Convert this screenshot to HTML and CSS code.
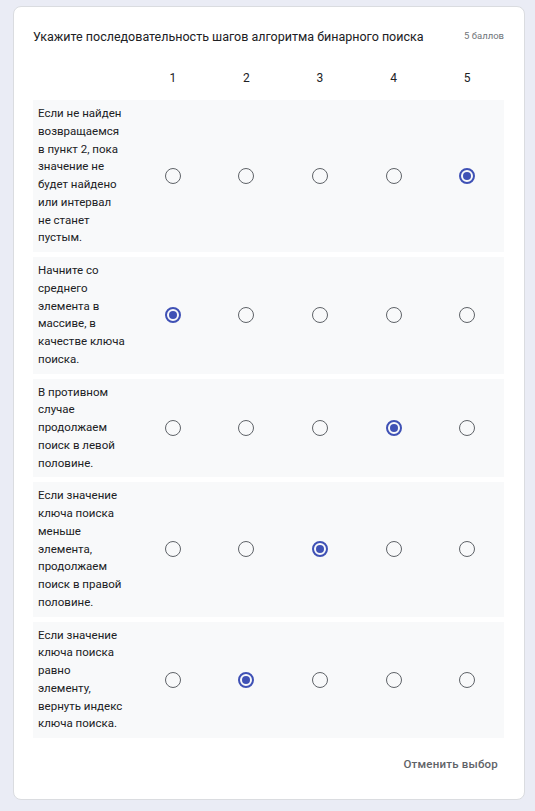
FILE: index.html
```html
<!DOCTYPE html>
<html lang="ru">
<head>
<meta charset="utf-8">
<link rel="stylesheet" href="styles.css">
</head>
<body>
<div class="card">
  <div class="head">
    <div class="title">Укажите последовательность шагов алгоритма бинарного поиска</div>
    <div class="points">5 баллов</div>
  </div>
  <div class="grid">
    <div class="hrow">
      <div></div>
      <div class="num">1</div><div class="num">2</div><div class="num">3</div><div class="num">4</div><div class="num">5</div>
    </div>
    <div class="row">
      <div class="label">Если не найден<br>возвращаемся<br>в пункт 2, пока<br>значение не<br>будет найдено<br>или интервал<br>не станет<br>пустым.</div>
      <div class="cell"><span class="radio"></span></div>
      <div class="cell"><span class="radio"></span></div>
      <div class="cell"><span class="radio"></span></div>
      <div class="cell"><span class="radio"></span></div>
      <div class="cell"><span class="radio on"></span></div>
    </div>
    <div class="row">
      <div class="label">Начните со<br>среднего<br>элемента в<br>массиве, в<br>качестве ключа<br>поиска.</div>
      <div class="cell"><span class="radio on"></span></div>
      <div class="cell"><span class="radio"></span></div>
      <div class="cell"><span class="radio"></span></div>
      <div class="cell"><span class="radio"></span></div>
      <div class="cell"><span class="radio"></span></div>
    </div>
    <div class="row">
      <div class="label">В противном<br>случае<br>продолжаем<br>поиск в левой<br>половине.</div>
      <div class="cell"><span class="radio"></span></div>
      <div class="cell"><span class="radio"></span></div>
      <div class="cell"><span class="radio"></span></div>
      <div class="cell"><span class="radio on"></span></div>
      <div class="cell"><span class="radio"></span></div>
    </div>
    <div class="row">
      <div class="label">Если значение<br>ключа поиска<br>меньше<br>элемента,<br>продолжаем<br>поиск в правой<br>половине.</div>
      <div class="cell"><span class="radio"></span></div>
      <div class="cell"><span class="radio"></span></div>
      <div class="cell"><span class="radio on"></span></div>
      <div class="cell"><span class="radio"></span></div>
      <div class="cell"><span class="radio"></span></div>
    </div>
    <div class="row">
      <div class="label">Если значение<br>ключа поиска<br>равно<br>элементу,<br>вернуть индекс<br>ключа поиска.</div>
      <div class="cell"><span class="radio"></span></div>
      <div class="cell"><span class="radio on"></span></div>
      <div class="cell"><span class="radio"></span></div>
      <div class="cell"><span class="radio"></span></div>
      <div class="cell"><span class="radio"></span></div>
    </div>
  </div>
  <div class="foot">
    <span class="clear">Отменить выбор</span>
  </div>
</div>
</body>
</html>
```
FILE: styles.css
```css
html, body {
  margin: 0;
  background: #eaecf5;
}
body {
  padding: 6px 11px 12px 13px;
  font-family: Roboto, "Liberation Sans", sans-serif;
  color: #202124;
}
.card {
  width: 471px;
  background: #fff;
  border: 1px solid #dadce0;
  border-radius: 8px;
  padding: 20px 20px 25px 19px;
}
.head {
  display: flex;
  justify-content: space-between;
  align-items: center;
}
.title {
  font-size: 12.5px;
  line-height: 20px;
  color: #202124;
  white-space: nowrap;
}
.points {
  font-size: 9.5px;
  color: #70757a;
  line-height: 20px;
  margin-top: -2px;
  white-space: nowrap;
}
.grid {
  display: flex;
  flex-direction: column;
  gap: 5px;
}
.hrow, .row {
  display: grid;
  grid-template-columns: 103px repeat(5, 1fr);
  align-items: center;
}
.hrow {
  padding: 21px 0 7px;
}
.num {
  text-align: center;
  font-size: 12px;
  line-height: 20px;
}
.row {
  background: #f8f9fa;
}
.label {
  font-size: 11.5px;
  line-height: 17.75px;
  padding: 5px 4px 5px 5px;
  white-space: nowrap;
}
.cell {
  display: flex;
  justify-content: center;
  align-items: center;
}
.radio {
  width: 16px;
  height: 16px;
  box-sizing: border-box;
  border: 1.5px solid #5f6368;
  border-radius: 50%;
  display: flex;
  justify-content: center;
  align-items: center;
}
.radio.on {
  border: 2px solid #3f51b5;
}
.radio.on::after {
  content: "";
  width: 8px;
  height: 8px;
  border-radius: 50%;
  background: #3f51b5;
}
.foot {
  display: flex;
  justify-content: flex-end;
  padding-top: 16px;
}
.clear {
  font-size: 11.5px;
  line-height: 20px;
  font-weight: 500;
  color: #5f6368;
  padding-right: 6px;
  letter-spacing: 0.2px;
}
```
